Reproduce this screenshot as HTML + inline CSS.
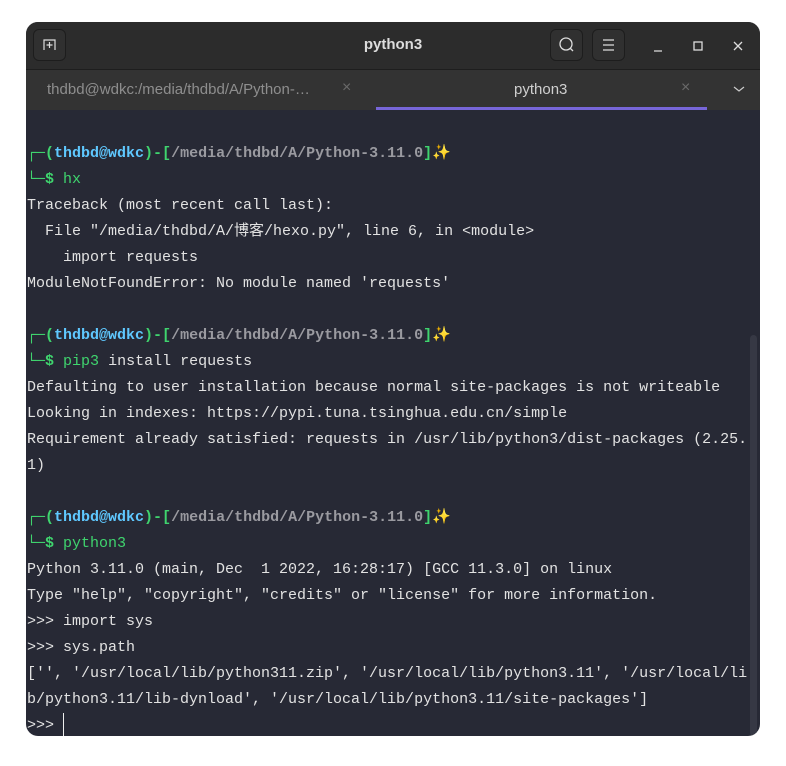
<!DOCTYPE html>
<html><head><meta charset="utf-8"><style>
html,body{margin:0;padding:0;background:#fff;width:786px;height:766px;overflow:hidden}
.win{position:absolute;left:26px;top:22px;width:734px;height:714px;border-radius:12px;overflow:hidden;background:#272935}
.title{position:absolute;left:0;top:0;width:734px;height:47px;background:#2c2c2c;border-bottom:1px solid #1e1e1e}
.tabs{position:absolute;left:0;top:48px;width:734px;height:40px;background:#333333}
.btn{position:absolute;top:7px;width:33px;height:32px;border-radius:6px;background:#303030;border:1px solid #1d1d1d;box-sizing:border-box}
.t{font-family:"Liberation Sans","DejaVu Sans",sans-serif}
.term{position:absolute;left:1px;top:67px;font-family:"Liberation Mono","DejaVu Sans Mono","Noto Sans CJK SC",monospace;font-size:15px;line-height:26px;color:#e2e2e2;white-space:pre}
.g{color:#3fd46e}.c{color:#5fc8ff;font-weight:bold}.p{color:#9a9aa0;font-weight:bold}.gb{color:#3fd46e;font-weight:bold}
</style></head><body>
<div class="win">
<div class="title">
 <div class="btn" style="left:7px"><svg width="31" height="30" viewBox="0 0 31 30"><path d="M10 20V10h11v10M15.5 12v6M12.5 15h6" stroke="#ddd" stroke-width="1.2" fill="none"/></svg></div>
 <div class="t" style="position:absolute;left:0;width:734px;top:14px;text-align:center;color:#dcdcdc;font-weight:bold;font-size:15px">python3</div>
 <div class="btn" style="left:524px"><svg width="31" height="30"><circle cx="15" cy="14" r="6" stroke="#ddd" stroke-width="1.3" fill="none"/><path d="M19 18l3 3" stroke="#ddd" stroke-width="1.3"/></svg></div>
 <div class="btn" style="left:566px"><svg width="31" height="30"><path d="M10 10h11M10 15h11M10 20h11" stroke="#ddd" stroke-width="1.2"/></svg></div>
 <svg style="position:absolute;left:620px;top:14px" width="110" height="20"><path d="M8 15h8" stroke="#ddd" stroke-width="1.3"/><rect x="48" y="6" width="8" height="8" stroke="#ddd" stroke-width="1.3" fill="none"/><path d="M88 6l8 8M96 6l-8 8" stroke="#ddd" stroke-width="1.3"/></svg>
</div>
<div class="tabs">
 <div class="t" style="position:absolute;left:21px;top:11px;color:#8e8e8e;font-size:15px">thdbd@wdkc:/media/thdbd/A/Python-…</div>
 <div style="position:absolute;left:316px;top:9px;color:#6a6a6a;font-size:16px" class="t">×</div>
 <div class="t" style="position:absolute;left:488px;top:11px;color:#cfcfcf;font-size:15px">python3</div>
 <div style="position:absolute;left:655px;top:9px;color:#6a6a6a;font-size:16px" class="t">×</div>
 <svg style="position:absolute;left:706px;top:14px" width="14" height="10"><path d="M2 3l5 4 5-4" stroke="#ccc" stroke-width="1.2" fill="none"/></svg>
 <div style="position:absolute;left:350px;top:37px;width:331px;height:3px;background:#7766d8"></div>
</div>
<div style="position:absolute;left:724px;top:313px;width:7px;height:401px;background:#363844;border-radius:4px"></div>
<div class="term">

<span class="g">┌─</span><span class="gb">(</span><span class="c">thdbd@wdkc</span><span class="gb">)-[</span><span class="p">/media/thdbd/A/Python-3.11.0</span><span class="gb">]</span><span style="color:#f5c518">✨</span>
<span class="g">└─</span><span class="gb">$</span> <span class="g">hx</span>
Traceback (most recent call last):
  File "/media/thdbd/A/博客/hexo.py", line 6, in &lt;module&gt;
    import requests
ModuleNotFoundError: No module named 'requests'

<span class="g">┌─</span><span class="gb">(</span><span class="c">thdbd@wdkc</span><span class="gb">)-[</span><span class="p">/media/thdbd/A/Python-3.11.0</span><span class="gb">]</span><span style="color:#f5c518">✨</span>
<span class="g">└─</span><span class="gb">$</span> <span class="g">pip3</span> install requests
Defaulting to user installation because normal site-packages is not writeable
Looking in indexes: https://pypi.tuna.tsinghua.edu.cn/simple
Requirement already satisfied: requests in /usr/lib/python3/dist-packages (2.25.
1)

<span class="g">┌─</span><span class="gb">(</span><span class="c">thdbd@wdkc</span><span class="gb">)-[</span><span class="p">/media/thdbd/A/Python-3.11.0</span><span class="gb">]</span><span style="color:#f5c518">✨</span>
<span class="g">└─</span><span class="gb">$</span> <span class="g">python3</span>
Python 3.11.0 (main, Dec  1 2022, 16:28:17) [GCC 11.3.0] on linux
Type "help", "copyright", "credits" or "license" for more information.
&gt;&gt;&gt; import sys
&gt;&gt;&gt; sys.path
['', '/usr/local/lib/python311.zip', '/usr/local/lib/python3.11', '/usr/local/li
b/python3.11/lib-dynload', '/usr/local/lib/python3.11/site-packages']
&gt;&gt;&gt; <span style="display:inline-block;width:1px;height:24px;background:#eee;vertical-align:middle"></span></div>
</div>
</body></html>
